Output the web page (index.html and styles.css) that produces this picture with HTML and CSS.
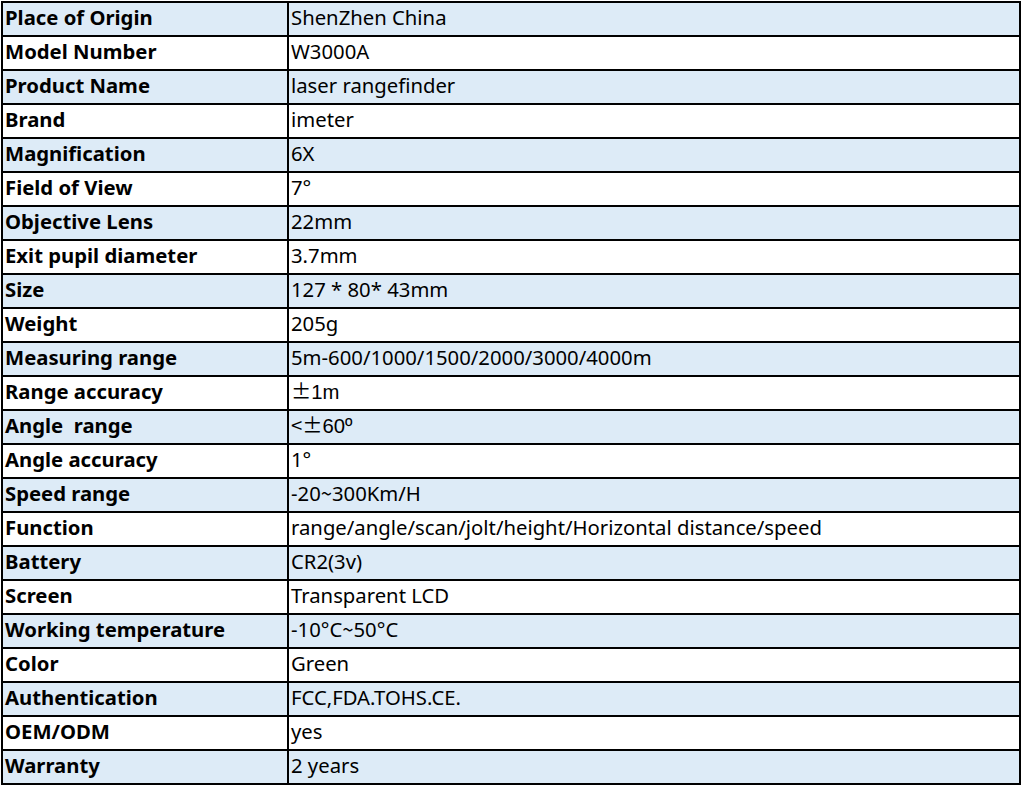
FILE: index.html
```html
<!DOCTYPE html>
<html>
<head>
<meta charset="utf-8">
<link rel="stylesheet" href="styles.css">
</head>
<body>
<table class="spec">
<colgroup><col class="c1"><col class="c2"></colgroup>
<tr class="blue"><th>Place of Origin</th><td>ShenZhen China</td></tr>
<tr><th>Model Number</th><td>W3000A</td></tr>
<tr class="blue"><th>Product Name</th><td>laser rangefinder</td></tr>
<tr><th>Brand</th><td>imeter</td></tr>
<tr class="blue"><th>Magnification</th><td>6X</td></tr>
<tr><th>Field of View</th><td>7°</td></tr>
<tr class="blue"><th>Objective Lens</th><td>22mm</td></tr>
<tr><th>Exit pupil diameter</th><td>3.7mm</td></tr>
<tr class="blue"><th>Size</th><td>127 * 80* 43mm</td></tr>
<tr><th>Weight</th><td>205g</td></tr>
<tr class="blue"><th>Measuring range</th><td>5m-600/1000/1500/2000/3000/4000m</td></tr>
<tr><th>Range accuracy</th><td><span class="alt"><span class="cjk">±</span>1m</span></td></tr>
<tr class="blue"><th>Angle&nbsp; range</th><td><span class="alt"><span class="cjk">&lt;±</span>60º</span></td></tr>
<tr><th>Angle accuracy</th><td>1°</td></tr>
<tr class="blue"><th>Speed range</th><td>-20<span class="cjk">~</span>300Km/H</td></tr>
<tr><th>Function</th><td>range/angle/scan/jolt/height/Horizontal distance/speed</td></tr>
<tr class="blue"><th>Battery</th><td>CR2(3v)</td></tr>
<tr><th>Screen</th><td>Transparent LCD</td></tr>
<tr class="blue"><th>Working temperature</th><td>-10°C<span class="cjk">~</span>50°C</td></tr>
<tr><th>Color</th><td>Green</td></tr>
<tr class="blue"><th>Authentication</th><td>FCC,FDA.TOHS.CE.</td></tr>
<tr><th>OEM/ODM</th><td>yes</td></tr>
<tr class="blue"><th>Warranty</th><td>2 years</td></tr>
</table>
</body>
</html>
```
FILE: styles.css
```css
html, body {
  margin: 0;
  padding: 0;
  background: #ffffff;
}
body {
  padding: 1px 0 0 1px;
  font-family: "Noto Sans", "Open Sans", sans-serif;
  color: #000;
}
.spec {
  border-collapse: collapse;
  width: 1020px;
  table-layout: fixed;
  margin: 0;
}
.c1 { width: 286px; }
.spec th, .spec td {
  border: 2px solid #000;
  height: 34px;
  padding: 0 2px 3px 2px;
  font-size: 20.3px;
  line-height: 29px;
  text-align: left;
  white-space: nowrap;
  box-sizing: border-box;
  overflow: hidden;
}
.spec th {
  font-weight: 700;
}
.spec td {
  font-weight: 400;
}
.spec tr.blue th, .spec tr.blue td {
  background: #ddebf7;
}
.alt {
  font-family: "Liberation Sans", Arial, sans-serif;
  line-height: 1;
}
.cjk {
  font-family: "Noto Sans CJK SC", sans-serif;
  line-height: 1;
}
```
